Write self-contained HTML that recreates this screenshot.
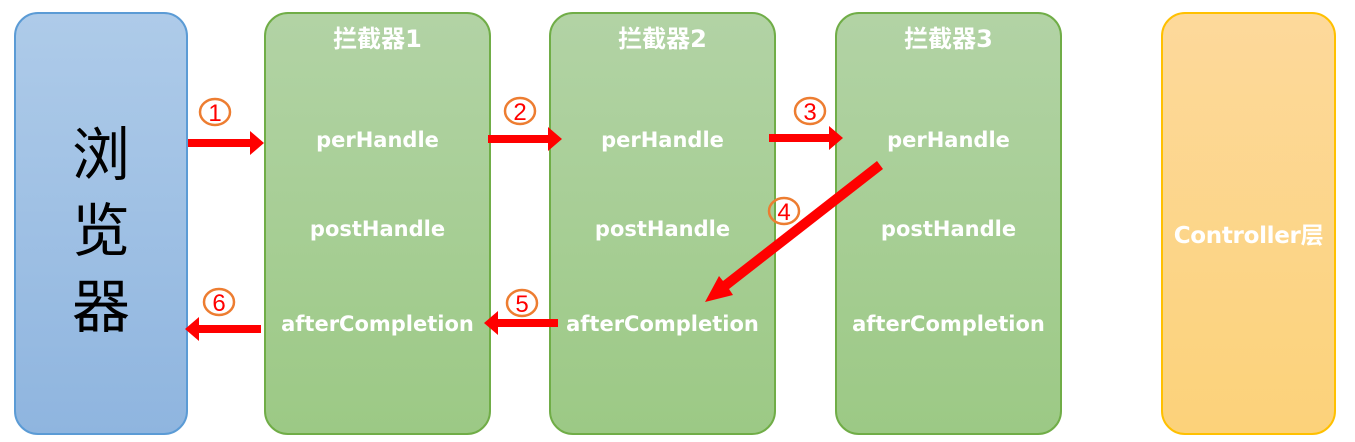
<!DOCTYPE html>
<html><head><meta charset="utf-8"><style>
body{margin:0;width:1355px;height:442px;background:#fff;overflow:hidden;position:relative;font-family:"DejaVu Sans","Noto Sans CJK SC",sans-serif}
.b{position:absolute;box-sizing:border-box;border-radius:24px}
.g{top:12px;height:423px;width:227px;border:2px solid #70ad47;background:linear-gradient(#b2d3a5,#9cc985)}
.t{position:absolute;left:0;right:0;text-align:center;color:#fff;font-weight:bold;white-space:nowrap}
.h{font-family:"DejaVu Sans","Noto Sans CJK SC",sans-serif;font-size:24px;top:9px;line-height:32px}
.l{font-size:21px}
</style></head><body>
<div class="b" style="left:14px;top:12px;width:174px;height:423px;border:2px solid #5b9bd5;background:linear-gradient(#aecbe9,#8fb5df)"></div>
<div style="position:absolute;left:14px;width:174px;top:112px;text-align:center;font-size:58px;line-height:76px;font-family:'Noto Sans CJK SC',sans-serif">浏<br>览<br>器</div>
<div class="b g" style="left:264px"><div class="t h">拦截器1</div><div class="t l" style="top:114px">perHandle</div><div class="t l" style="top:203px">postHandle</div><div class="t l" style="top:298px">afterCompletion</div></div>
<div class="b g" style="left:549px"><div class="t h">拦截器2</div><div class="t l" style="top:114px">perHandle</div><div class="t l" style="top:203px">postHandle</div><div class="t l" style="top:298px">afterCompletion</div></div>
<div class="b g" style="left:835px"><div class="t h">拦截器3</div><div class="t l" style="top:114px">perHandle</div><div class="t l" style="top:203px">postHandle</div><div class="t l" style="top:298px">afterCompletion</div></div>
<div class="b" style="left:1161px;top:12px;width:175px;height:423px;border:2px solid #ffc000;background:linear-gradient(#fdd99b,#fcd27a)"><div class="t" style="top:202px;font-size:23px;letter-spacing:-0.3px">Controller层</div></div>
<svg width="1355" height="442" style="position:absolute;left:0;top:0">
<g fill="#f00">
<path d="M188 139h62v-8l14 12-14 12v-8h-62z"/>
<path d="M488 135h60v-8l14 12-14 12v-8h-60z"/>
<path d="M769 134h60v-8l14 12-14 12v-8h-60z"/>
<path d="M558 319h-60v-8l-14 12 14 12v-8h60z"/>
<path d="M261 325h-62v-8l-14 12 14 12v-8h62z"/>
<polygon points="877,161 723,281 719,276 705,302 733,295 729,289 883,169"/>
</g>
<g fill="none" stroke="#ed7d31" stroke-width="2.5">
<ellipse cx="215" cy="112" rx="15" ry="13"/>
<ellipse cx="520" cy="111" rx="15" ry="13"/>
<ellipse cx="810" cy="111" rx="15" ry="13"/>
<ellipse cx="784" cy="211" rx="15" ry="13"/>
<ellipse cx="522" cy="303" rx="15" ry="13"/>
<ellipse cx="219" cy="302" rx="15" ry="13"/>
</g>
<g fill="#f00" font-size="24" text-anchor="middle" font-family="Liberation Sans">
<text x="215" y="121">1</text><text x="520" y="120">2</text><text x="810" y="120">3</text><text x="784" y="220">4</text><text x="522" y="312">5</text><text x="219" y="311">6</text>
</g>
</svg>
</body></html>
